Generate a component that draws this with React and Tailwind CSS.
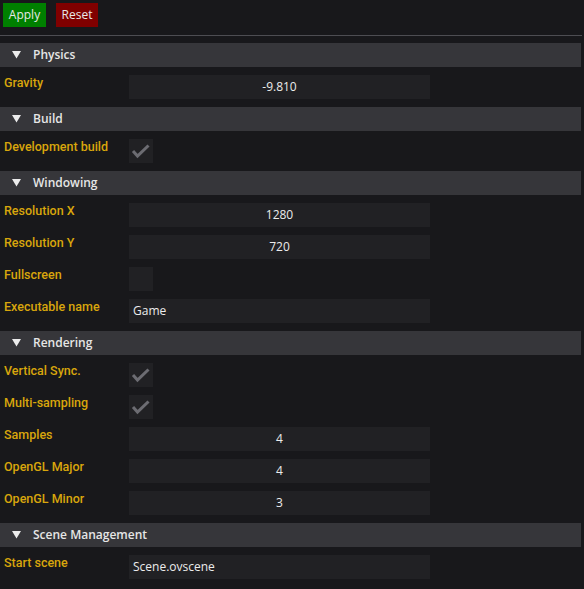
import React from "react";

const font = { fontFamily: '"Open Sans", "DejaVu Sans", sans-serif' };

function Header({ title }) {
  return (
    <div className="h-6 w-[581px] bg-[#36363a] flex items-center text-[12px] font-semibold text-[#e6e6e6]">
      <svg width="9" height="8" viewBox="0 0 9 8" className="ml-3 mr-3">
        <polygon points="0,0 9,0 4.5,7.5" fill="#ececec" />
      </svg>
      <span>{title}</span>
    </div>
  );
}

function Row({ label, children }) {
  return (
    <div className="h-6 flex">
      <div className="w-[129px] pl-1 text-[12.5px] font-medium text-[#d9a60c] leading-[16px] font-['Roboto',sans-serif]">{label}</div>
      {children}
    </div>
  );
}

function Num({ v }) {
  return (
    <div className="w-[301px] h-6 bg-[#212124] flex items-center justify-center text-[12px] font-medium text-[#ececec]">{v}</div>
  );
}

function Str({ v }) {
  return (
    <div className="w-[301px] h-6 bg-[#212124] flex items-center pl-1 text-[12px] font-medium text-[#ececec]">{v}</div>
  );
}

function Check({ on }) {
  return (
    <div className="w-6 h-6 bg-[#212124]">
      {on && (
        <svg width="24" height="24" viewBox="0 0 24 24">
          <polyline points="4,12 8.5,17 19.5,6.5" fill="none" stroke="#6c6c72" strokeWidth="3" />
        </svg>
      )}
    </div>
  );
}

export default function App() {
  return (
    <div className="w-[584px] h-[589px] bg-[#18181b] overflow-hidden" style={font}>
      <div className="flex gap-[10px] pt-[3px] pl-[3px]">
        <div className="w-[43px] h-6 bg-[#008000] text-[#e8e8e8] text-[12px] font-medium flex items-center justify-center">Apply</div>
        <div className="w-[42px] h-6 bg-[#800000] text-[#e8e8e8] text-[12px] font-medium flex items-center justify-center">Reset</div>
      </div>
      <div className="mt-[8px] w-[582px] h-[1px] bg-[#4d4d52]" />
      <div className="mt-[7px] flex flex-col gap-2">
        <Header title="Physics" />
        <Row label="Gravity"><Num v="-9.810" /></Row>
        <Header title="Build" />
        <Row label="Development build"><Check on /></Row>
        <Header title="Windowing" />
        <Row label="Resolution X"><Num v="1280" /></Row>
        <Row label="Resolution Y"><Num v="720" /></Row>
        <Row label="Fullscreen"><Check /></Row>
        <Row label="Executable name"><Str v="Game" /></Row>
        <Header title="Rendering" />
        <Row label="Vertical Sync."><Check on /></Row>
        <Row label="Multi-sampling"><Check on /></Row>
        <Row label="Samples"><Num v="4" /></Row>
        <Row label="OpenGL Major"><Num v="4" /></Row>
        <Row label="OpenGL Minor"><Num v="3" /></Row>
        <Header title="Scene Management" />
        <Row label="Start scene"><Str v="Scene.ovscene" /></Row>
      </div>
    </div>
  );
}
